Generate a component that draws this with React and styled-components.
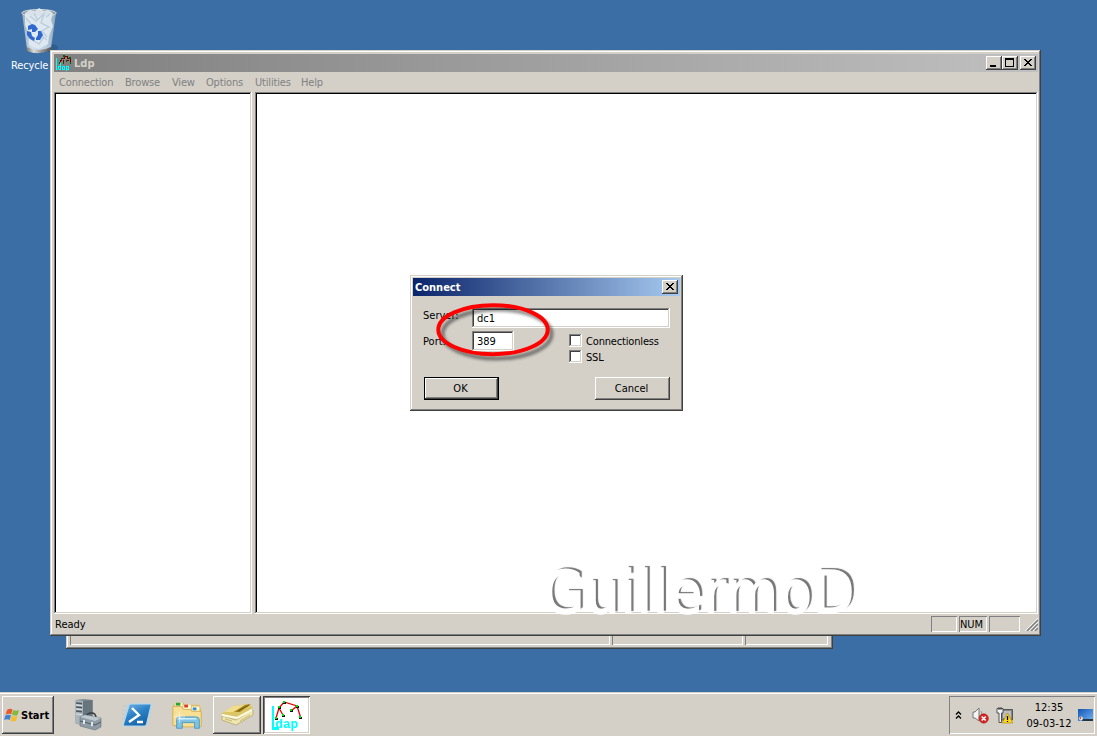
import React from 'react';
import styled, { createGlobalStyle, css } from 'styled-components';

const face = '#d4d0c8';

const GlobalStyle = createGlobalStyle`
  * { box-sizing: border-box; }
  html, body { margin: 0; padding: 0; overflow: hidden; }
  body {
    font-family: "DejaVu Sans Condensed", "DejaVu Sans", sans-serif;
    font-stretch: condensed;
    font-size: 11px;
    line-height: 14px;
    color: #000;
    cursor: default;
  }
  svg { display: block; flex: none; }
`;

const raised = css`
  background: ${face};
  box-shadow: inset -1px -1px #404040, inset 1px 1px #fff, inset -2px -2px #808080;
`;
const windowEdge = css`
  background: ${face};
  box-shadow: inset -1px -1px #404040, inset 1px 1px ${face}, inset -2px -2px #808080, inset 2px 2px #fff;
`;
const sunken = css`
  background: #fff;
  box-shadow: inset -1px -1px #fff, inset 1px 1px #808080, inset -2px -2px ${face}, inset 2px 2px #000;
`;
const softSunken = css`
  background: #fff;
  box-shadow: inset -1px -1px #fff, inset 1px 1px #808080, inset -2px -2px ${face}, inset 2px 2px #404040;
`;
const shallow = css`
  box-shadow: inset 1px 1px #808080, inset -1px -1px #fff;
`;

const Screen = styled.div`
  width: 1097px;
  height: 736px;
  display: flex;
  flex-direction: column;
  background: #3a6ea5;
`;
const Desktop = styled.div`
  position: relative;
  height: 692px;
  flex: none;
`;
const Shortcut = styled.div`
  position: absolute;
  left: 11px;
  top: 6px;
  width: 76px;
  color: #fff;
  white-space: nowrap;
`;
const ShortcutLabel = styled.div`
  margin-top: 3px;
  letter-spacing: -0.1px;
`;
const BackWindow = styled.div`
  position: absolute;
  left: 66px;
  top: 560px;
  width: 767px;
  height: 89px;
  padding: 4px;
  display: flex;
  align-items: flex-end;
  gap: 2px;
  ${windowEdge}
`;
const BackPane = styled.div`
  width: ${p => p.$w}px;
  height: 60px;
  ${shallow}
`;
const MainWindow = styled.div`
  position: absolute;
  left: 50px;
  top: 50px;
  width: 991px;
  height: 586px;
  padding: 4px 3px 3px 4px;
  display: flex;
  flex-direction: column;
  ${windowEdge}
`;
const TitleBar = styled.div`
  height: 18px;
  flex: none;
  display: flex;
  align-items: center;
  padding: 0 2px;
  font-weight: bold;
  color: ${p => (p.$active ? '#fff' : face)};
  background: ${p => (p.$active
    ? 'linear-gradient(90deg, #0a246a, #a6caf0)'
    : 'linear-gradient(90deg, #808080, #c0c0c0)')};
`;
const TitleText = styled.span`
  flex: 1;
  padding-top: 2px;
  margin-left: ${p => p.$ml || 0}px;
`;
const CaptionButton = styled.div`
  width: 16px;
  height: 14px;
  margin-left: ${p => p.$gap || 0}px;
  display: grid;
  place-items: center;
  ${raised}
`;
const MenuBar = styled.div`
  height: 20px;
  flex: none;
  display: flex;
  align-items: center;
  padding: 1px 0 0 5px;
  color: #808080;
`;
const MenuItem = styled.span`
  width: ${p => p.$w}px;
  letter-spacing: -0.17px;
  white-space: nowrap;
`;
const Panes = styled.div`
  height: 522px;
  flex: none;
  display: flex;
  gap: 3px;
`;
const Pane = styled.div`
  width: ${p => (p.$w ? `${p.$w}px` : 'auto')};
  flex: ${p => (p.$w ? 'none' : '1')};
  ${sunken}
`;
const StatusBar = styled.div`
  height: 19px;
  display: flex;
  align-items: center;
  padding: 2px 0 1px 1px;
  gap: 2px;
`;
const StatusText = styled.span`
  flex: 1;
  padding-top: 2px;
`;
const StatusCell = styled.div`
  width: ${p => p.$w}px;
  height: 16px;
  line-height: 17px;
  padding-left: 1px;
  letter-spacing: -0.1px;
  ${shallow}
`;
const Watermark = styled.div`
  position: absolute;
  left: 543px;
  top: 558px;
  font-size: 59px;
  line-height: 70px;
  letter-spacing: 1.5px;
  color: #fff;
  -webkit-text-stroke: 1.5px #fff;
  text-shadow: 3px -2.5px 0.8px #777;
`;
const Dialog = styled.div`
  position: absolute;
  left: 410px;
  top: 275px;
  width: 273px;
  height: 136px;
  padding: 3px;
  ${windowEdge}
`;
const DialogBody = styled.div`
  padding: 12px 10px 0;
`;
const FieldRow = styled.div`
  display: flex;
  height: ${p => p.$h}px;
`;
const Label = styled.div`
  width: 49px;
  flex: none;
  padding-top: ${p => p.$top}px;
`;
const Field = styled.div`
  width: ${p => p.$w}px;
  height: 20px;
  flex: none;
  padding: 4px 0 0 5px;
  ${softSunken}
`;
const Checks = styled.div`
  margin: 3px 0 0 55px;
`;
const Check = styled.div`
  height: 16px;
  display: flex;
  gap: 4px;
  line-height: 16px;
  letter-spacing: -0.17px;
`;
const Box = styled.div`
  width: 13px;
  height: 13px;
  ${softSunken}
`;
const Buttons = styled.div`
  display: flex;
  justify-content: space-between;
  padding: 1px 0 0 1px;
`;
const PushButton = styled.div`
  width: 75px;
  height: 23px;
  text-align: center;
  line-height: 23px;
  padding-right: 2px;
  ${raised}
  ${p => p.$default && css`
    box-shadow: inset 0 0 0 1px #000, inset -2px -2px #404040, inset 2px 2px #fff, inset -3px -3px #808080;
  `}
`;
const Highlight = styled.svg`
  position: absolute;
  left: 425px;
  top: 295px;
`;
const Taskbar = styled.div`
  height: 44px;
  display: flex;
  align-items: flex-start;
  padding: 4px 2px 0 2px;
  background: ${face};
  box-shadow: inset 0 1px ${face}, inset 0 2px #fff;
`;
const StartButton = styled.div`
  width: 52px;
  height: 38px;
  display: flex;
  align-items: center;
  padding: 1px 0 0 2px;
  gap: 1px;
  font-weight: bold;
  ${raised}
`;
const QuickItem = styled.div`
  width: ${p => p.$w || 48}px;
  height: 38px;
  margin-left: ${p => p.$ml || 2}px;
  display: grid;
  place-items: center;
  ${p => p.$state === 'up' && raised}
  ${p => p.$state === 'down' && css`
    background: #fff;
    box-shadow: inset 1px 1px #404040, inset -1px -1px #fff, inset 2px 2px #808080, inset -2px -2px ${face};
  `}
`;
const Tray = styled.div`
  width: 146px;
  height: 38px;
  margin-left: auto;
  display: flex;
  align-items: center;
  padding-left: 6px;
  ${shallow}
`;
const TrayIcon = styled.div`
  margin-left: ${p => p.$ml || 0}px;
`;
const Clock = styled.div`
  width: 48px;
  margin-left: 11px;
  padding-top: 2px;
  text-align: center;
  line-height: 16px;
  white-space: nowrap;
`;

const RecycleBin = () => (
  <svg width="52" height="50" viewBox="0 0 52 50">
    <defs>
      <linearGradient id="bin" x1="0" x2="1">
        <stop offset="0" stopColor="#91a9bd" /><stop offset=".3" stopColor="#d5e2ed" />
        <stop offset=".7" stopColor="#bccfdf" /><stop offset="1" stopColor="#8fa7bc" />
      </linearGradient>
      <linearGradient id="base" x1="0" x2="1">
        <stop offset="0" stopColor="#777" /><stop offset=".3" stopColor="#ddd" /><stop offset=".6" stopColor="#999" /><stop offset="1" stopColor="#555" />
      </linearGradient>
    </defs>
    <ellipse cx="40" cy="42" rx="7" ry="4" fill="#2b5684" opacity=".7" />
    <path d="M11 7 L16 43 Q28 49 40 42 L45 7Z" fill="url(#bin)" />
    <path d="M15.500 41Q28 47 40 41L40 44Q28 50 16 45Z" fill="url(#base)" />
    <ellipse cx="28" cy="7" rx="17.300" ry="3.500" fill="#8d9aa3" stroke="#d6dadc" />
    <path d="M14 7L19 4 24 5 28 2 33 5 37 4 42 7 40 14 42 20 38 30 37 38 28 43 18 39 18 28 14 19Z" fill="#e1eaf2" opacity=".9" />
    <path d="M19 10l6 5 8-7-3 9 8 4-7 4 5 6M20 33l8 5 5-7M23 7l3 6M15 12l5 6M35 11l4-3M30 29l6 5" stroke="#bccddb" strokeWidth="1.400" fill="none" />
    <path d="M17 20l4-2 3 1 3 4-3 3-3 0 0-3-4 1zM27 25l3 0 2 4-3 5-4 0 0-2 2-3zM16 25l4 1 1 4 3 2-1 3-4-2-3-4z" fill="#2f69cd" />
  </svg>
);

const LdapLarge = () => (
  <svg width="47" height="38" viewBox="0 0 47 38" shapeRendering="crispEdges">
    <path d="M9 10h2v21h5v3H9Z" fill="#00ffff" />
    <path d="M13 22L16 12 21 6 34 10 37.500 21M16 12L20 19M34 10L28 15" stroke="#e00000" strokeWidth="1.300" fill="none" shapeRendering="auto" />
    {[[21, 6], [16, 11], [34, 10], [13, 22], [20, 19], [28, 14], [37, 21]].map(([x, y]) => (
      <g key={`${x}-${y}`}><rect x={x - 1} y={y} width="3" height="2" fill="#111" /><rect x={x - 1} y={y - 1} width="2" height="2" fill="#00e000" /></g>
    ))}
    <text x="12" y="32" fontFamily="Liberation Mono, monospace" fontWeight="bold" fontSize="13" textLength="23" lengthAdjust="spacingAndGlyphs" fill="#00ffff" shapeRendering="auto">dap</text>
  </svg>
);

const LdapSmall = () => (
  <svg width="16" height="16" viewBox="0 0 16 16" shapeRendering="crispEdges">
    <path d="M4 7V5h1V3h3V1h3v2h3v5M7 5v3M11 5h2" stroke="#6e0000" fill="none" />
    <path d="M3 7h1v2H3zM7 0h2v2H7zM13 2h2v2h-2zM10 5h1v2h-1zM14 7h1v2h-1zM5 3h1v2H5zM7 7h1v2H7z" fill="#006000" />
    <path d="M0 3h1v11h2v1H0zM4 8h1v7H2v-4h2zM3 12v2h1v-2zM6 11h3v4H6zM7 12v2h1v-2zM10 11h3v4h-2v1h-1zM11 12v2h1v-2z" fill="#00ffff" fillRule="evenodd" />
  </svg>
);

const Flag = () => (
  <svg width="16" height="15" viewBox="0 0 16 15">
    <path d="M3 2Q6-.2 8.500 1.500L7.300 6.300Q4.500 4.900 1.600 6.600Z" fill="#e85a2a" />
    <path d="M9.200 2Q12 3.500 15 2L13.700 7Q11 8.300 8 6.800Z" fill="#82b93c" />
    <path d="M1.300 7.500Q4 5.900 7 7.300L5.700 12Q3 10.500.200 12Z" fill="#3f83d4" />
    <path d="M7.800 7.700Q11 9.100 13.500 7.800L12.200 12.600Q9 14.500 6.500 12.600Z" fill="#f5bd2c" />
  </svg>
);

const ServerManager = () => (
  <svg width="28" height="32" viewBox="0 0 28 32">
    <path d="M1 1L10 0 19 1V25L10 27 1 24Z" fill="#818c92" />
    <path d="M1 1L9 2V26L1 24Z" fill="#a9b5ba" /><path d="M9 2L18 1V25L9 27Z" fill="#69757c" />
    <path d="M2 4l6 .6M2 8l6 .6M2 12l6 .6" stroke="#4d5960" strokeWidth="1.700" />
    <path d="M2 6l6 .6M2 10l6 .6M2 15l6 .6" stroke="#dfe8eb" />
    <path d="M12 18Q13 14 17.500 14Q22 14 22 19" fill="none" stroke="#333c42" strokeWidth="1.500" />
    <path d="M6 18L11 16 27 19V28L21 31 6 27Z" fill="#8f9ca5" stroke="#65727b" strokeWidth=".6" />
    <path d="M6 18L11 16 27 19 21 22Z" fill="#bec9cf" /><path d="M6 22L21 26 27 23" stroke="#4f5b64" fill="none" />
    <path d="M10 21v4M18 23v4" stroke="#e1e8ec" strokeWidth="2" />
  </svg>
);

const PowerShell = () => (
  <svg width="32" height="26" viewBox="0 0 32 26">
    <defs><linearGradient id="ps" x2=".6" y2="1"><stop stopColor="#7bb7e5" /><stop offset=".5" stopColor="#2c83c8" /><stop offset="1" stopColor="#1762a4" /></linearGradient></defs>
    <path d="M0 4h8M0 8h7M0 12h6M0 16h5" stroke="#a9c2d6" opacity=".6" />
    <path d="M7 3Q7.500 2 9 2H28Q29.500 2 29 3.500L24.500 22.500Q24 24 22.500 24H2.500Q1 24 1.500 22Z" fill="url(#ps)" stroke="#a8d8f3" strokeWidth="1.200" />
    <path d="M10 6L17 13 7 20M15 20H21" stroke="#fff" strokeWidth="2.400" fill="none" />
  </svg>
);

const Explorer = () => (
  <svg width="34" height="31" viewBox="0 0 36 31">
    <path d="M2 6L4 2H13L15 4H30L32 8V25L29 27H4L2 24Z" fill="#e0bd60" />
    <path d="M4 2H12V8H4zM13 4h8v5h-8zM22 6h8v5h-8z" fill="#fff7d7" />
    <path d="M5 2h5v3H5z" fill="#29a32e" /><path d="M14 4h4v3h-4z" fill="#d43f25" /><path d="M23 7h4v3h-4z" fill="#2b90d6" />
    <path d="M2 6H11L13 9H20L22 11H32V27Q17 29 2 26Z" fill="#f7df94" stroke="#d5af56" />
    <path d="M6 29V19Q6 17 9 17H26Q30 17 30 20V29H25V23H12V29Z" fill="#7fc2e2" stroke="#4a99c4" />
    <path d="M8 19H27" stroke="#d5f2fc" strokeWidth="1.500" /><path d="M9 11v12M3 17h12M6 14l6 6M12 14l-6 6" stroke="#fff" strokeWidth=".8" opacity=".75" />
  </svg>
);

const Ledger = () => (
  <svg width="34" height="24" viewBox="0 0 34 24">
    <path d="M2 13L16 17 33 7V12L16 22 2 17Z" fill="#efe5ae" stroke="#a5974f" strokeWidth=".6" />
    <path d="M1 11L13 3 29 1 33 5 17 14Z" fill="#dcc565" /><path d="M4 9L13 3 25 2 13 9Z" fill="#f0dd8d" />
    <path d="M14 9L25 2 31 1 20 9Z" fill="#a58519" /><path d="M18 8L29 2" stroke="#6c5918" strokeWidth="1" />
    <path d="M2 12L17 15 32 7" stroke="#fffbe0" strokeWidth="2" fill="none" /><path d="M5 16l7 2M20 18l10-6" stroke="#c9b970" />
  </svg>
);

const Close = () => (
  <svg width="10" height="8" viewBox="0 0 10 8" shapeRendering="crispEdges">
    <path d="M1 0h2v1h1v1h2V1h1V0h2v1H8v1H7v1H6v1h1v1h1v1h1v1H7V6H6V5H4v1H3v1H1V6h1V5h1V4h1V3H3V2H2V1H1z" />
  </svg>
);
const Minimize = () => (
  <svg width="10" height="10" shapeRendering="crispEdges"><path d="M1 7h6v2H1z" /></svg>
);
const Maximize = () => (
  <svg width="10" height="10" shapeRendering="crispEdges"><path fillRule="evenodd" d="M0 0h9v9H0zM1 2v6h7V2z" /></svg>
);

const Grip = () => (
  <svg width="13" height="13" viewBox="0 0 13 13">
    <path d="M2 13L13 2M6 13L13 6M10 13L13 10" stroke="#808080" strokeWidth="1.500" />
    <path d="M0 13L13 0M4 13L13 4M8 13L13 8" stroke="#fff" strokeWidth=".8" />
  </svg>
);
const Chevrons = () => (
  <svg width="7" height="9" viewBox="0 0 7 9"><path d="M1 3.500L3.500 1 6 3.500M1 7.500L3.500 5 6 7.500" fill="none" stroke="#000" strokeWidth="1.300" /></svg>
);
const Speaker = () => (
  <svg width="17" height="17" viewBox="0 0 17 17">
    <path d="M1 5H3L7 1V14L3 11H1Z" fill="#f4f4f4" stroke="#777" />
    <path d="M9 4q2 3 0 6" stroke="#999" fill="none" />
    <circle cx="11.700" cy="11.500" r="4.700" fill="#d62525" stroke="#a70c0c" strokeWidth=".5" /><path d="M9.700 9.500l4 4M13.700 9.500l-4 4" stroke="#fff" strokeWidth="1.600" />
  </svg>
);
const Network = () => (
  <svg width="18" height="17" viewBox="0 0 18 17">
    <path d="M5.500 2.500H16.500V13H5.500Z" fill="#888" stroke="#555" /><path d="M7 4h8v7H7z" fill="#bcbcbc" />
    <path d="M1 1.500h6V6H5.500V15.500H3V6H1Z" fill="#f4f4f4" stroke="#444" strokeWidth=".9" />
    <path d="M3 0v3M5 0v3" stroke="#444" />
    <path d="M11.500 6L16.800 16H6.300Z" fill="#ffda22" stroke="#b18b00" strokeWidth=".7" /><path d="M11.500 9v4M11.500 14v1" stroke="#000" strokeWidth="1.300" />
  </svg>
);
const ShowDesktop = () => (
  <svg width="15" height="13" viewBox="0 0 15 13">
    <defs><linearGradient id="sd" x2="1" y2="1"><stop stopColor="#1454b4" /><stop offset="1" stopColor="#71b5f5" /></linearGradient></defs>
    <path d="M0 0H15V12H0Z" fill="url(#sd)" /><path d="M4 10H15V12H4Z" fill="#26364a" /><circle cx="3" cy="9.500" r="1.900" fill="#e8e0d0" /><path d="M2 8h1v2H2z" fill="#e84424" />
  </svg>
);

export default function App() {
  return (
    <Screen>
      <GlobalStyle />
      <Desktop>
        <Shortcut>
          <RecycleBin />
          <ShortcutLabel>Recycle Bin</ShortcutLabel>
        </Shortcut>
        <BackWindow>
          <BackPane $w={540} /><BackPane $w={131} /><BackPane $w={83} />
        </BackWindow>
        <MainWindow>
          <TitleBar>
            <LdapSmall />
            <TitleText $ml={2}>Ldp</TitleText>
            <CaptionButton><Minimize /></CaptionButton>
            <CaptionButton><Maximize /></CaptionButton>
            <CaptionButton $gap={2}><Close /></CaptionButton>
          </TitleBar>
          <MenuBar>
            <MenuItem $w={66}>Connection</MenuItem>
            <MenuItem $w={47}>Browse</MenuItem>
            <MenuItem $w={34}>View</MenuItem>
            <MenuItem $w={49}>Options</MenuItem>
            <MenuItem $w={46}>Utilities</MenuItem>
            <MenuItem $w={30}>Help</MenuItem>
          </MenuBar>
          <Panes><Pane $w={198} /><Pane /></Panes>
          <StatusBar>
            <StatusText>Ready</StatusText>
            <StatusCell $w={26} /><StatusCell $w={28}>NUM</StatusCell><StatusCell $w={31} />
            <TrayIcon $ml={3}><Grip /></TrayIcon>
          </StatusBar>
        </MainWindow>
        <Watermark>GuillermoD</Watermark>
        <Dialog>
          <TitleBar $active>
            <TitleText>Connect</TitleText>
            <CaptionButton><Close /></CaptionButton>
          </TitleBar>
          <DialogBody>
            <FieldRow $h={23}><Label $top={1}>Server:</Label><Field $w={198}>dc1</Field></FieldRow>
            <FieldRow $h={45}>
              <Label $top={4}>Port:</Label><Field $w={42}>389</Field>
              <Checks>
                <Check><Box />Connectionless</Check>
                <Check><Box />SSL</Check>
              </Checks>
            </FieldRow>
            <Buttons><PushButton $default>OK</PushButton><PushButton>Cancel</PushButton></Buttons>
          </DialogBody>
        </Dialog>
        <Highlight width="140" height="75">
          <defs><filter id="soft" x="-20%" y="-30%" width="140%" height="170%"><feGaussianBlur stdDeviation="1.7" /></filter></defs>
          <ellipse cx="72" cy="39" rx="54.500" ry="24.500" fill="none" stroke="#000" strokeOpacity=".45" strokeWidth="4" filter="url(#soft)" />
          <ellipse cx="68" cy="34.700" rx="54.700" ry="24.500" fill="none" stroke="#ff0000" strokeWidth="4" />
        </Highlight>
      </Desktop>
      <Taskbar>
        <StartButton><Flag />Start</StartButton>
        <QuickItem $ml={10}><ServerManager /></QuickItem>
        <QuickItem><PowerShell /></QuickItem>
        <QuickItem><Explorer /></QuickItem>
        <QuickItem $ml={1} $state="up"><Ledger /></QuickItem>
        <QuickItem $w={47} $state="down"><LdapLarge /></QuickItem>
        <Tray>
          <Chevrons />
          <TrayIcon $ml={10}><Speaker /></TrayIcon>
          <TrayIcon $ml={7}><Network /></TrayIcon>
          <Clock>12:35<br />09-03-12</Clock>
          <TrayIcon $ml={5}><ShowDesktop /></TrayIcon>
        </Tray>
      </Taskbar>
    </Screen>
  );
}
